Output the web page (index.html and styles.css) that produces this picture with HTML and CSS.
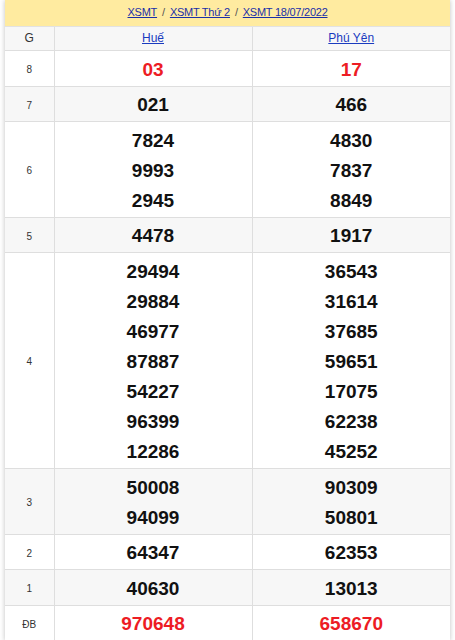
FILE: index.html
```html
<!DOCTYPE html>
<html lang="vi">
<head>
<meta charset="utf-8">
<link rel="stylesheet" href="styles.css">
</head>
<body>
<div class="box">
  <div class="crumb">
    <a href="#">XSMT</a><span class="sep">/</span><a href="#">XSMT Thứ 2</a><span class="sep">/</span><a href="#">XSMT 18/07/2022</a>
  </div>
  <table class="kq">
    <colgroup><col class="c-g"><col><col></colgroup>
    <tr class="alt head"><td class="g">G</td><td><a href="#">Huế</a></td><td><a href="#">Phú Yên</a></td></tr>
    <tr><td class="g">8</td><td><div class="n red">03</div></td><td><div class="n red">17</div></td></tr>
    <tr class="alt"><td class="g">7</td><td><div class="n">021</div></td><td><div class="n">466</div></td></tr>
    <tr><td class="g">6</td><td><div class="n">7824</div><div class="n">9993</div><div class="n">2945</div></td><td><div class="n">4830</div><div class="n">7837</div><div class="n">8849</div></td></tr>
    <tr class="alt"><td class="g">5</td><td><div class="n">4478</div></td><td><div class="n">1917</div></td></tr>
    <tr><td class="g">4</td><td><div class="n">29494</div><div class="n">29884</div><div class="n">46977</div><div class="n">87887</div><div class="n">54227</div><div class="n">96399</div><div class="n">12286</div></td><td><div class="n">36543</div><div class="n">31614</div><div class="n">37685</div><div class="n">59651</div><div class="n">17075</div><div class="n">62238</div><div class="n">45252</div></td></tr>
    <tr class="alt"><td class="g">3</td><td><div class="n">50008</div><div class="n">94099</div></td><td><div class="n">90309</div><div class="n">50801</div></td></tr>
    <tr><td class="g">2</td><td><div class="n">64347</div></td><td><div class="n">62353</div></td></tr>
    <tr class="alt"><td class="g">1</td><td><div class="n">40630</div></td><td><div class="n">13013</div></td></tr>
    <tr><td class="g">ĐB</td><td><div class="n red">970648</div></td><td><div class="n red">658670</div></td></tr>
  </table>
</div>
</body>
</html>
```
FILE: styles.css
```css
html, body {
  margin: 0;
  padding: 0;
  background: #fff;
}
body {
  font-family: "Liberation Sans", Arial, sans-serif;
  color: #111;
}
.box {
  margin: 0 5px;
  box-shadow: 0 0 5px rgba(0, 0, 0, 0.25);
  background: #fff;
}
.crumb {
  background: #ffeba0;
  height: 26px;
  line-height: 25px;
  text-align: center;
  font-size: 11px;
  letter-spacing: -0.25px;
  border-bottom: 1px solid #e2e2e2;
}
.crumb a {
  color: #1a2fa8;
  text-decoration: underline;
}
.sep {
  color: #555;
  margin: 0 5px;
}
.kq {
  width: 100%;
  border-collapse: collapse;
  table-layout: fixed;
}
.c-g {
  width: 49px;
}
.kq td {
  border: 1px solid #dedede;
  text-align: center;
  vertical-align: middle;
  padding: 3.6px 0 1px;
}
.kq tr td:first-child { border-left: 0; }
.kq tr td:last-child { border-right: 0; }
.kq tr:first-child td { border-top: 0; }
.alt td {
  background: #f7f7f7;
}
.head td {
  height: 19px;
  font-size: 12px;
  padding: 1px 0 3px;
}
.head td a {
  color: #1a3bbf;
  text-decoration: underline;
}
.g {
  font-size: 10px;
  color: #333;
}
.head .g {
  font-size: 12px;
}
.n {
  font-size: 19px;
  font-weight: bold;
  line-height: 30px;
  color: #111;
}
.n.red {
  color: #ed1c24;
}
```
